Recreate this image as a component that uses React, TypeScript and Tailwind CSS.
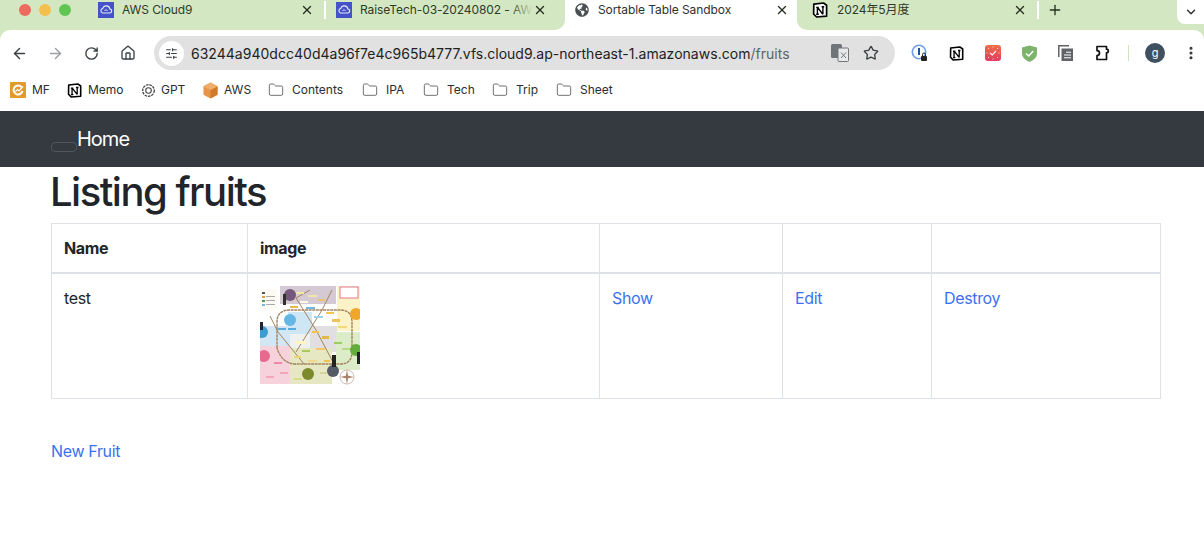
import { ArrowLeft, ArrowRight, ChevronDown, EllipsisVertical, Folder, House, Plus, RotateCw, SlidersHorizontal, Star, X } from 'lucide-react';
import { FaGlobeAmericas } from 'react-icons/fa';

function CloudTab() {
    return (
        <svg width="16" height="16" viewBox="0 0 16 16" className="shrink-0">
            <rect width="16" height="16" fill="#4453c8" />
            <path d="M4.5 11h7a2 2 0 0 0 .3-4 3.6 3.6 0 0 0-7-.6A2.4 2.4 0 0 0 4.5 11z" fill="none" stroke="#e6e8fa" strokeWidth="1.1" />
            <path d="M6.5 9 8 7.5 9.5 9" fill="none" stroke="#e6e8fa" strokeWidth="1" />
        </svg>
    );
}

function NotionIcon({ size = 15 }: { size?: number }) {
    return (
        <svg width={size} height={size} viewBox="0 0 16 16" className="shrink-0">
            <path d="M1.8 2.2 11.5 1 14.6 3.2V14.2L4.6 15 1.6 12Z" fill="#fff" stroke="#000" strokeWidth="1.7" strokeLinejoin="round" />
            <path d="M5.4 5.4V12.2M5.6 5.4 10.8 12.2M10.9 4.8V12.2M4.2 5.4H6.8M4.2 12.3H6.8M9.6 4.8H12.2" fill="none" stroke="#000" strokeWidth="1.4" />
        </svg>
    );
}

const tabs = [
    { title: "AWS Cloud9", w: "w-[241px]", pad: "pl-[13px]", text: "w-[178px]", fade: false },
    { title: "RaiseTech-03-20240802 - AW", w: "w-[239px]", pad: "pl-[10px]", text: "w-[173px]", fade: true },
];

const folders = [
    { label: "Contents", w: "w-[70px]" },
    { label: "IPA", w: "w-[37px]" },
    { label: "Tech", w: "w-[45px]" },
    { label: "Trip", w: "w-[40px]" },
    { label: "Sheet", w: "w-[40px]" },
];

// tiny station labels of the route map thumbnail
const mapLabels: [number, number, number, number, string][] = [
    [25, 8, 7, 2, "#d9a441"], [36, 6, 8, 2, "#f2e9a0"], [48, 9, 9, 2, "#f4e6a6"], [58, 13, 7, 2, "#e9c46a"],
    [40, 15, 8, 2, "#fdfbe8"], [30, 20, 8, 2, "#e9b949"], [46, 21, 9, 2, "#6fb7e0"], [66, 26, 8, 2, "#f3c74f"],
    [54, 30, 9, 2, "#9fd0ee"], [72, 33, 8, 3, "#eec35b"], [78, 40, 9, 2, "#f5d77c"], [18, 42, 8, 2, "#59a9dc"],
    [28, 42, 8, 2, "#59a9dc"], [36, 55, 10, 3, "#fff4c4"], [52, 45, 7, 2, "#f2c14e"], [62, 50, 7, 3, "#e6b93e"],
    [74, 56, 8, 2, "#9bcf63"], [82, 62, 9, 2, "#b9d98a"], [56, 62, 9, 2, "#f6c667"], [42, 64, 8, 2, "#a7c957"],
    [34, 70, 7, 2, "#eed27a"], [48, 74, 9, 2, "#f0d98a"], [14, 76, 8, 2, "#ef8aa5"], [20, 86, 8, 2, "#f4a6b9"],
    [6, 90, 8, 2, "#f4a6b9"], [64, 74, 6, 2, "#f1c24e"], [34, 92, 8, 2, "#d7dc8c"], [60, 86, 7, 2, "#d5d3a0"],
    [2, 6, 3, 2, "#555"], [2, 10, 3, 2, "#d9a441"], [2, 14, 3, 2, "#3f9b56"], [2, 18, 3, 2, "#6fb7e0"],
    [6, 10, 9, 1, "#aaa"], [6, 14, 9, 1, "#aaa"], [6, 18, 9, 1, "#aaa"],
];

function MapThumb() {
    return (
        <svg width="100" height="100" viewBox="0 0 100 100" className="block blur-[0.5px]">
            <rect width="100" height="100" fill="#fff" />
            <rect x="20" y="0" width="56" height="18" fill="#d5c9d4" />
            <rect x="77" y="0" width="23" height="45" fill="#fcf2c7" />
            <rect x="80" y="1" width="18" height="11" fill="#fff" stroke="#d9577a" strokeWidth="0.8" />
            <rect x="28" y="26" width="24" height="22" fill="#cfe6f5" />
            <rect x="0" y="40" width="30" height="20" fill="#d3e6f4" />
            <rect x="30" y="48" width="20" height="14" fill="#eef1ee" />
            <rect x="50" y="40" width="27" height="26" fill="#e1dfe2" />
            <rect x="76" y="46" width="24" height="38" fill="#dcebc8" />
            <rect x="0" y="60" width="30" height="38" fill="#f6d2dc" />
            <rect x="30" y="62" width="42" height="36" fill="#e5e8c3" />
            <path d="M17 62V36Q17 24 30 24H80Q92 24 92 36V66Q92 78 80 78H36Q22 78 17 62Z" fill="none" stroke="#a3845e" strokeWidth="1.4" strokeDasharray="3 0.6" />
            <path d="M36 12 56 44 74 78M62 24 36 66M18 46 44 78M10 30 18 46M50 4 36 12M72 4 62 24" fill="none" stroke="#a3845e" strokeWidth="1" />
            <rect x="0" y="3" width="17" height="20" fill="#fbfbf4" />
            {mapLabels.map((label, idx) => (
                <rect key={idx} x={label[0]} y={label[1]} width={label[2]} height={label[3]} fill={label[4]} />
            ))}
            <circle cx="2" cy="46" r="6" fill="#3d9ccf" />
            <circle cx="30" cy="34" r="6" fill="#64b7e4" />
            <circle cx="4" cy="70" r="6" fill="#e66a8c" />
            <circle cx="30" cy="9" r="6" fill="#75567c" />
            <circle cx="96" cy="28" r="6" fill="#f0a62b" />
            <circle cx="96" cy="64" r="6" fill="#63ad3d" />
            <circle cx="48" cy="88" r="6" fill="#7c8a2c" />
            <circle cx="73" cy="85" r="6" fill="#555b66" />
            <circle cx="87" cy="91" r="7" fill="#fff" stroke="#b89c8a" strokeWidth="0.7" />
            <path d="M87 84 88.4 91 87 98 85.6 91ZM80 91 87 89.6 94 91 87 92.4Z" fill="#a9806a" />
            <rect x="72" y="69" width="4" height="12" fill="#222" />
            <rect x="97" y="66" width="3" height="12" fill="#222" />
            <rect x="0" y="36" width="3" height="8" fill="#223" />
            <rect x="23" y="8" width="3" height="11" fill="#33302a" />
        </svg>
    );
}

function Cell({ className, children }: { className?: string; children?: React.ReactNode }) {
    return <td className={`border border-[#dee2e6] p-3 align-top ${className ?? ""}`}>{children}</td>;
}

export default function App() {
    return (
        <div className="h-[539px] w-[1204px] overflow-hidden bg-white font-['Inter',sans-serif] text-[#212529]">
            {/* tab strip */}
            <div className="flex h-[30px] bg-white text-[12px] tracking-[-0.08px]">
                <div className="flex h-full w-[565px] items-center rounded-br-[10px] bg-[#d3e8c2] pb-[10px]">
                    <div className="flex w-[85px] shrink-0 gap-[8px] pl-[19px]">
                        <span className="h-[12px] w-[12px] rounded-full bg-[#ec6a5e]"></span>
                        <span className="h-[12px] w-[12px] rounded-full bg-[#f4bf4f]"></span>
                        <span className="h-[12px] w-[12px] rounded-full bg-[#61c554]"></span>
                    </div>
                    {tabs.map((tab, idx) => (
                        <div key={idx} className={`flex ${tab.w} ${tab.pad} shrink-0 items-center ${tab.fade ? "" : "border-r-2 border-white"}`}>
                            <CloudTab />
                            <span className={`relative ml-[8px] ${tab.text} whitespace-nowrap text-[#2e3a2a]`}>
                                {tab.title}
                                {tab.fade && <span className="absolute right-0 top-0 h-full w-[24px] bg-gradient-to-r from-transparent to-[#d3e8c2]"></span>}
                            </span>
                            <X size={14} strokeWidth={2.4} className="text-[#26301f]" />
                        </div>
                    ))}
                </div>
                <div className="flex h-full w-[232px] shrink-0 items-center bg-white pb-[10px] pl-[10px]">
                    <FaGlobeAmericas size={14} className="text-[#4b4f54]" />
                    <span className="ml-[9px] w-[177px] text-[#2f3033]">Sortable Table Sandbox</span>
                    <X size={14} strokeWidth={2.4} className="text-[#26301f]" />
                </div>
                <div className="relative flex h-full flex-1 items-center rounded-bl-[10px] bg-[#d3e8c2] pb-[10px]">
                    <div className="flex w-[242px] shrink-0 items-center border-r-2 border-white pl-[15px]">
                        <NotionIcon size={16} />
                        <span className="ml-[9px] w-[176px] font-['Inter','Noto_Sans_CJK_JP',sans-serif] text-[#2e3a2a]">2024年5月度</span>
                        <X size={14} strokeWidth={2.4} className="text-[#26301f]" />
                    </div>
                    <Plus size={16} strokeWidth={2} className="ml-[8px] text-[#26301f]" />
                    <div className="absolute right-0 top-0 flex h-[24px] w-[27px] items-center justify-center rounded-bl-lg bg-white">
                        <ChevronDown size={14} strokeWidth={2.5} className="text-[#333]" />
                    </div>
                </div>
            </div>

            {/* address bar */}
            <div className="h-[46px] bg-[#d3e8c2]">
                <div className="flex h-full items-center rounded-t-[10px] bg-white">
                    <ArrowLeft size={17} strokeWidth={2} className="ml-[11px] text-[#3c4043]" />
                    <ArrowRight size={17} strokeWidth={2} className="ml-[19px] text-[#9aa0a6]" />
                    <RotateCw size={15} strokeWidth={2.2} className="ml-[20px] text-[#3c4043]" />
                    <House size={16} strokeWidth={2} className="ml-[21px] text-[#3c4043]" />
                    <div className="ml-[18px] flex h-[34px] w-[741px] items-center rounded-full bg-[#e1e1e1] pl-[5px]">
                        <div className="flex h-[25px] w-[25px] items-center justify-center rounded-full bg-white">
                            <SlidersHorizontal size={13} className="text-[#3c4043]" />
                        </div>
                        <div className="ml-[7px] w-[640px] whitespace-nowrap text-[14px] tracking-[0.02px] text-[#1f2124]">
                            63244a940dcc40d4a96f7e4c965b4777.vfs.cloud9.ap-northeast-1.amazonaws.com<span className="text-[#5f6368]">/fruits</span>
                        </div>
                        <svg width="18" height="18" viewBox="0 0 18 18" className="shrink-0">
                            <rect x="0" y="0" width="11" height="14" rx="1.5" fill="#70757a" />
                            <rect x="7" y="4" width="10.5" height="13.5" rx="1" fill="#e9e9e9" stroke="#70757a" />
                            <path d="M10 8.5 15 14M15 8.5 10 14" stroke="#70757a" strokeWidth="1" />
                        </svg>
                        <Star size={16} strokeWidth={2} className="ml-[14px] text-[#3c4043]" />
                    </div>
                    <svg width="18" height="18" viewBox="0 0 18 18" className="ml-[16px] shrink-0">
                        <circle cx="8" cy="8" r="6.7" fill="#fff" stroke="#6b9ff0" strokeWidth="1.6" />
                        <rect x="7" y="4" width="2" height="7" fill="#1a4fa0" />
                        <path d="M11.5 12V10.5A1.5 1.5 0 0 1 14.5 10.5V12" fill="none" stroke="#222" strokeWidth="1" />
                        <rect x="10" y="12" width="6" height="5" rx="1" fill="#222" />
                    </svg>
                    <span className="ml-[20px]"><NotionIcon size={15} /></span>
                    <svg width="16" height="16" viewBox="0 0 16 16" className="ml-[21px] shrink-0">
                        <defs>
                            <linearGradient id="redIcon" x1="0" y1="0" x2="0" y2="1">
                                <stop offset="0" stopColor="#ee6f45" />
                                <stop offset="1" stopColor="#e33a63" />
                            </linearGradient>
                        </defs>
                        <rect width="16" height="16" rx="3" fill="url(#redIcon)" />
                        <path d="M5.2 8 7.3 10 11 5.8" fill="none" stroke="#fff" strokeWidth="1.2" />
                        <path d="M3 3.5h1M12 3.5h1M3 12.5h1M12 12.5h1M8 1.5v1M8 13.5v1M1.5 8h1M13.5 8h1" stroke="#ffd7d0" strokeWidth="1" />
                    </svg>
                    <svg width="15" height="17" viewBox="0 0 15 17" className="ml-[21px] shrink-0">
                        <path d="M7.5 .5 15 2.5V8.5Q15 14 7.5 17 0 14 0 8.5V2.5Z" fill="#7db36b" />
                        <path d="M4 8.5 6.8 11 11.2 6" fill="none" stroke="#fff" strokeWidth="1.5" />
                    </svg>
                    <svg width="15" height="16" viewBox="0 0 15 16" className="ml-[21px] shrink-0">
                        <path d="M.8 12V.8H11" fill="none" stroke="#5f6368" strokeWidth="1.5" />
                        <rect x="3.5" y="3.5" width="11.5" height="12.5" fill="#5f6368" />
                        <path d="M8 7.2H13M6 10H13M6 12.8H13" stroke="#fff" strokeWidth="1.1" />
                    </svg>
                    <svg width="16" height="16" viewBox="0 0 16 16" className="ml-[21px] shrink-0">
                        <path d="M1 1.5H10.5V4.2A1.8 1.8 0 0 1 10.5 7.8V14.5H1V10.6A2.4 2.4 0 0 0 1 5.6Z" transform="translate(2 0)" fill="none" stroke="#111" strokeWidth="1.7" strokeLinejoin="round" />
                    </svg>
                    <span className="ml-[18px] h-[16px] w-[1px] bg-[#cfe3be]"></span>
                    <div className="ml-[16px] flex h-[20px] w-[20px] items-center justify-center rounded-full bg-[#3f5060] text-[11px] text-white">g</div>
                    <EllipsisVertical size={16} strokeWidth={2.6} className="ml-[18px] text-[#333]" />
                </div>
            </div>

            {/* bookmarks */}
            <div className="flex h-[35px] items-center pb-[7px] pl-[10px] text-[12px] text-[#2b2d30]">
                <svg width="16" height="16" viewBox="0 0 16 16" className="shrink-0">
                    <rect width="16" height="16" rx="1" fill="#e39a2c" />
                    <path d="M11.5 5A4.5 4.5 0 1 0 12.5 9" fill="none" stroke="#fff" strokeWidth="2" />
                    <path d="M5.5 9.5 7.5 7.5 9 9 13 4.5" fill="none" stroke="#fff" strokeWidth="1.2" />
                </svg>
                <span className="ml-[6px] w-[35px]">MF</span>
                <NotionIcon size={15} />
                <span className="ml-[6px] w-[53px]">Memo</span>
                <svg width="15" height="15" viewBox="0 0 14 14" className="shrink-0">
                    <circle cx="7" cy="7" r="5.4" fill="none" stroke="#444" strokeWidth="1.2" strokeDasharray="2.4 0.8" />
                    <circle cx="7" cy="7" r="2.6" fill="none" stroke="#444" strokeWidth="1" />
                </svg>
                <span className="ml-[5px] w-[42px]">GPT</span>
                <svg width="15" height="17" viewBox="0 0 16 17" className="shrink-0">
                    <path d="M8 0 15.5 4V13L8 17 .5 13V4Z" fill="#e8954a" />
                    <path d="M8 8 15.5 4V13L8 17Z" fill="#d27a2c" />
                    <path d="M8 0 15.5 4 8 8 .5 4Z" fill="#f0ae6c" />
                </svg>
                <span className="ml-[6px] w-[44px]">AWS</span>
                {folders.map((folder, idx) => (
                    <div key={idx} className="flex shrink-0 items-center">
                        <Folder size={16} strokeWidth={1.2} className="text-[#4a4d50]" />
                        <span className={`ml-[8px] ${folder.w}`}>{folder.label}</span>
                    </div>
                ))}
            </div>

            {/* nav */}
            <nav className="relative flex h-[56px] items-center bg-[#343a40] pl-[77px] text-[20px] tracking-[-1px] text-white">
                <span className="absolute left-[51px] top-[31px] h-[10px] w-[26px] rounded-[4px] border border-[#4f555b]"></span>
                <span>Home</span>
            </nav>

            <main className="px-[51px]">
                <h1 className="mb-[7px] -ml-[1px] pt-[1px] text-[40px] font-medium leading-[48px] tracking-[-1.5px]">Listing fruits</h1>
                <table className="w-[1110px] table-fixed border-collapse text-[16px] leading-[24px] tracking-[-0.35px]">
                    <thead>
                        <tr className="font-bold">
                            <td className="w-[196px] border border-b-2 border-[#dee2e6] p-3 align-top">Name</td>
                            <td className="w-[352px] border border-b-2 border-[#dee2e6] p-3 align-top">image</td>
                            <td className="w-[183px] border border-b-2 border-[#dee2e6] p-3"></td>
                            <td className="w-[149px] border border-b-2 border-[#dee2e6] p-3"></td>
                            <td className="border border-b-2 border-[#dee2e6] p-3"></td>
                        </tr>
                    </thead>
                    <tbody>
                        <tr>
                            <Cell>test</Cell>
                            <Cell><MapThumb /></Cell>
                            <Cell className="text-[#3b71f0]">Show</Cell>
                            <Cell className="text-[#3b71f0]">Edit</Cell>
                            <Cell className="text-[#3b71f0]">Destroy</Cell>
                        </tr>
                    </tbody>
                </table>
                <div className="mt-[40px] text-[16px] leading-[24px] tracking-[-0.35px] text-[#3b71f0]">New Fruit</div>
            </main>
        </div>
    );
}
